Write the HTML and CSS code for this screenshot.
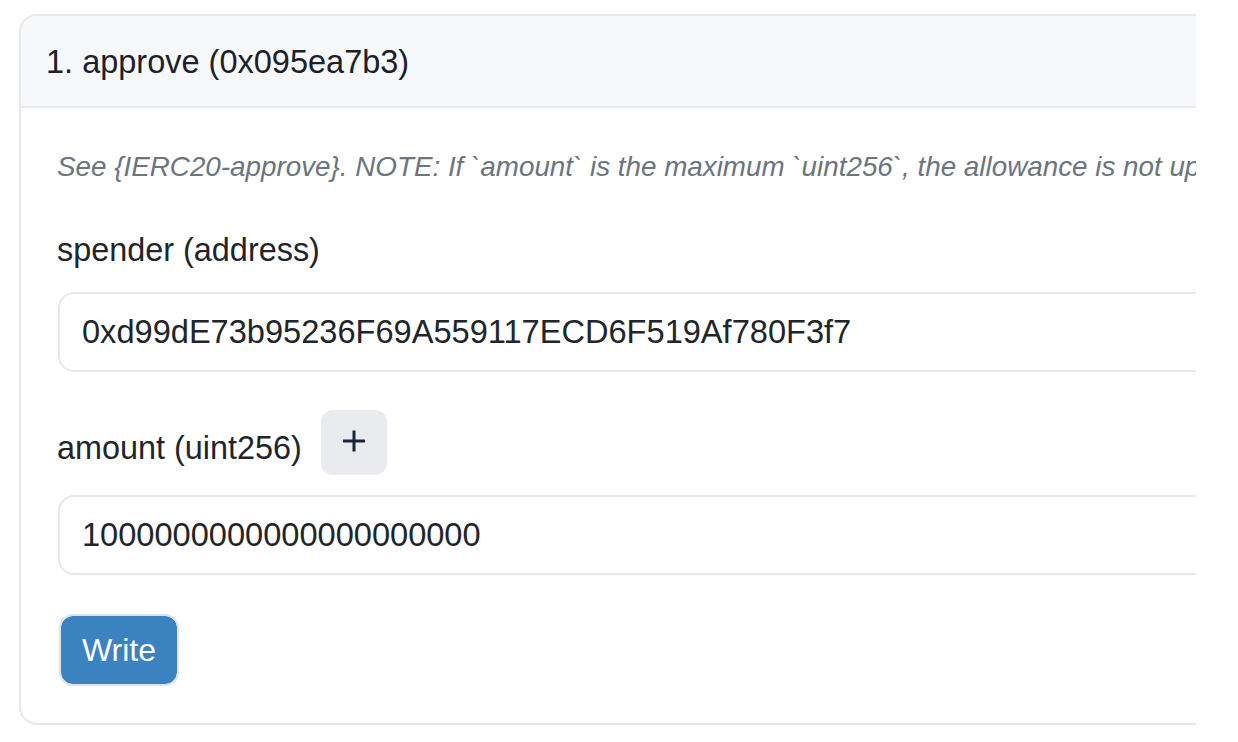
FILE: index.html
```html
<!DOCTYPE html>
<html>
<head>
<meta charset="utf-8">
<link rel="stylesheet" href="styles.css">
</head>
<body>
<div class="viewport">
  <div class="card">
    <div class="card-header">1. approve (0x095ea7b3)</div>
    <div class="card-body">
      <p class="desc">See {IERC20-approve}. NOTE: If `amount` is the maximum `uint256`, the allowance is not updated on `transferFrom`. This is semantically equivalent to an infinite approval.</p>
      <div class="field">
        <div class="label-row"><span class="label">spender (address)</span></div>
        <div class="input">0xd99dE73b95236F69A559117ECD6F519Af780F3f7</div>
      </div>
      <div class="field">
        <div class="label-row">
          <span class="label label-amount">amount (uint256)</span>
          <button class="plus-btn" type="button" aria-label="add">
            <svg width="24" height="24" viewBox="0 0 24 24"><path d="M12 1.5V22.5M1 12H23" stroke="#1b2638" stroke-width="3" fill="none"/></svg>
          </button>
        </div>
        <div class="input">1000000000000000000000</div>
      </div>
      <button class="write-btn" type="button">Write</button>
    </div>
  </div>
</div>
</body>
</html>
```

FILE: styles.css
```css
html, body {
  margin: 0;
  padding: 0;
  background: #ffffff;
}

body {
  font-family: "Liberation Sans", Arial, sans-serif;
  color: #212529;
}

.viewport {
  width: 1196px;
  height: 742px;
  overflow: hidden;
  padding-top: 14px;
  padding-left: 19px;
  box-sizing: border-box;
}

.card {
  width: 1500px;
  border: 2px solid #e6e8ec;
  border-radius: 18px;
  overflow: hidden;
  background: #ffffff;
}

.card-header {
  height: 92px;
  box-sizing: border-box;
  border-bottom: 2px solid #e6e8ec;
  background: #f7f8fa;
  padding: 0 25px;
  font-size: 32.5px;
  line-height: 92px;
  color: #1c2129;
  white-space: nowrap;
}

.card-body {
  padding: 38px 0 37px 36px;
}

.desc {
  margin: 0 0 38px 0;
  font-size: 27.8px;
  line-height: 42px;
  font-style: italic;
  color: #6c747d;
  white-space: nowrap;
}

.field {
  margin-bottom: 38px;
}

.label-row {
  display: flex;
  align-items: flex-end;
  gap: 19px;
  margin-bottom: 18px;
}

.label {
  font-size: 32.4px;
  line-height: 48px;
  color: #212529;
  white-space: nowrap;
}

.label-amount {
  padding-bottom: 3px;
}

.plus-btn {
  width: 66px;
  height: 65px;
  border: none;
  border-radius: 12px;
  background: #e9ebef;
  display: flex;
  align-items: center;
  justify-content: center;
  padding: 0;
  margin-bottom: 0;
}

.plus-btn svg {
  display: block;
  margin-top: -3px;
}

.input {
  margin-left: 1px;
  height: 80px;
  box-sizing: border-box;
  border: 2px solid #e6e8ec;
  border-radius: 16px;
  padding: 0 22px;
  font-size: 32.6px;
  line-height: 76px;
  color: #212529;
  white-space: nowrap;
}

.field + .field .label-row {
  margin-bottom: 20px;
}

.field:last-of-type {
  margin-bottom: 39px;
}

.write-btn {
  display: block;
  margin-left: 2px;
  width: 120px;
  height: 72px;
  border: 2px solid #dde4ec;
  border-radius: 14px;
  background: #3b82c0;
  background-clip: padding-box;
  color: #ffffff;
  font-family: "Liberation Sans", Arial, sans-serif;
  font-size: 32px;
  line-height: 48px;
  padding: 0;
}
```
